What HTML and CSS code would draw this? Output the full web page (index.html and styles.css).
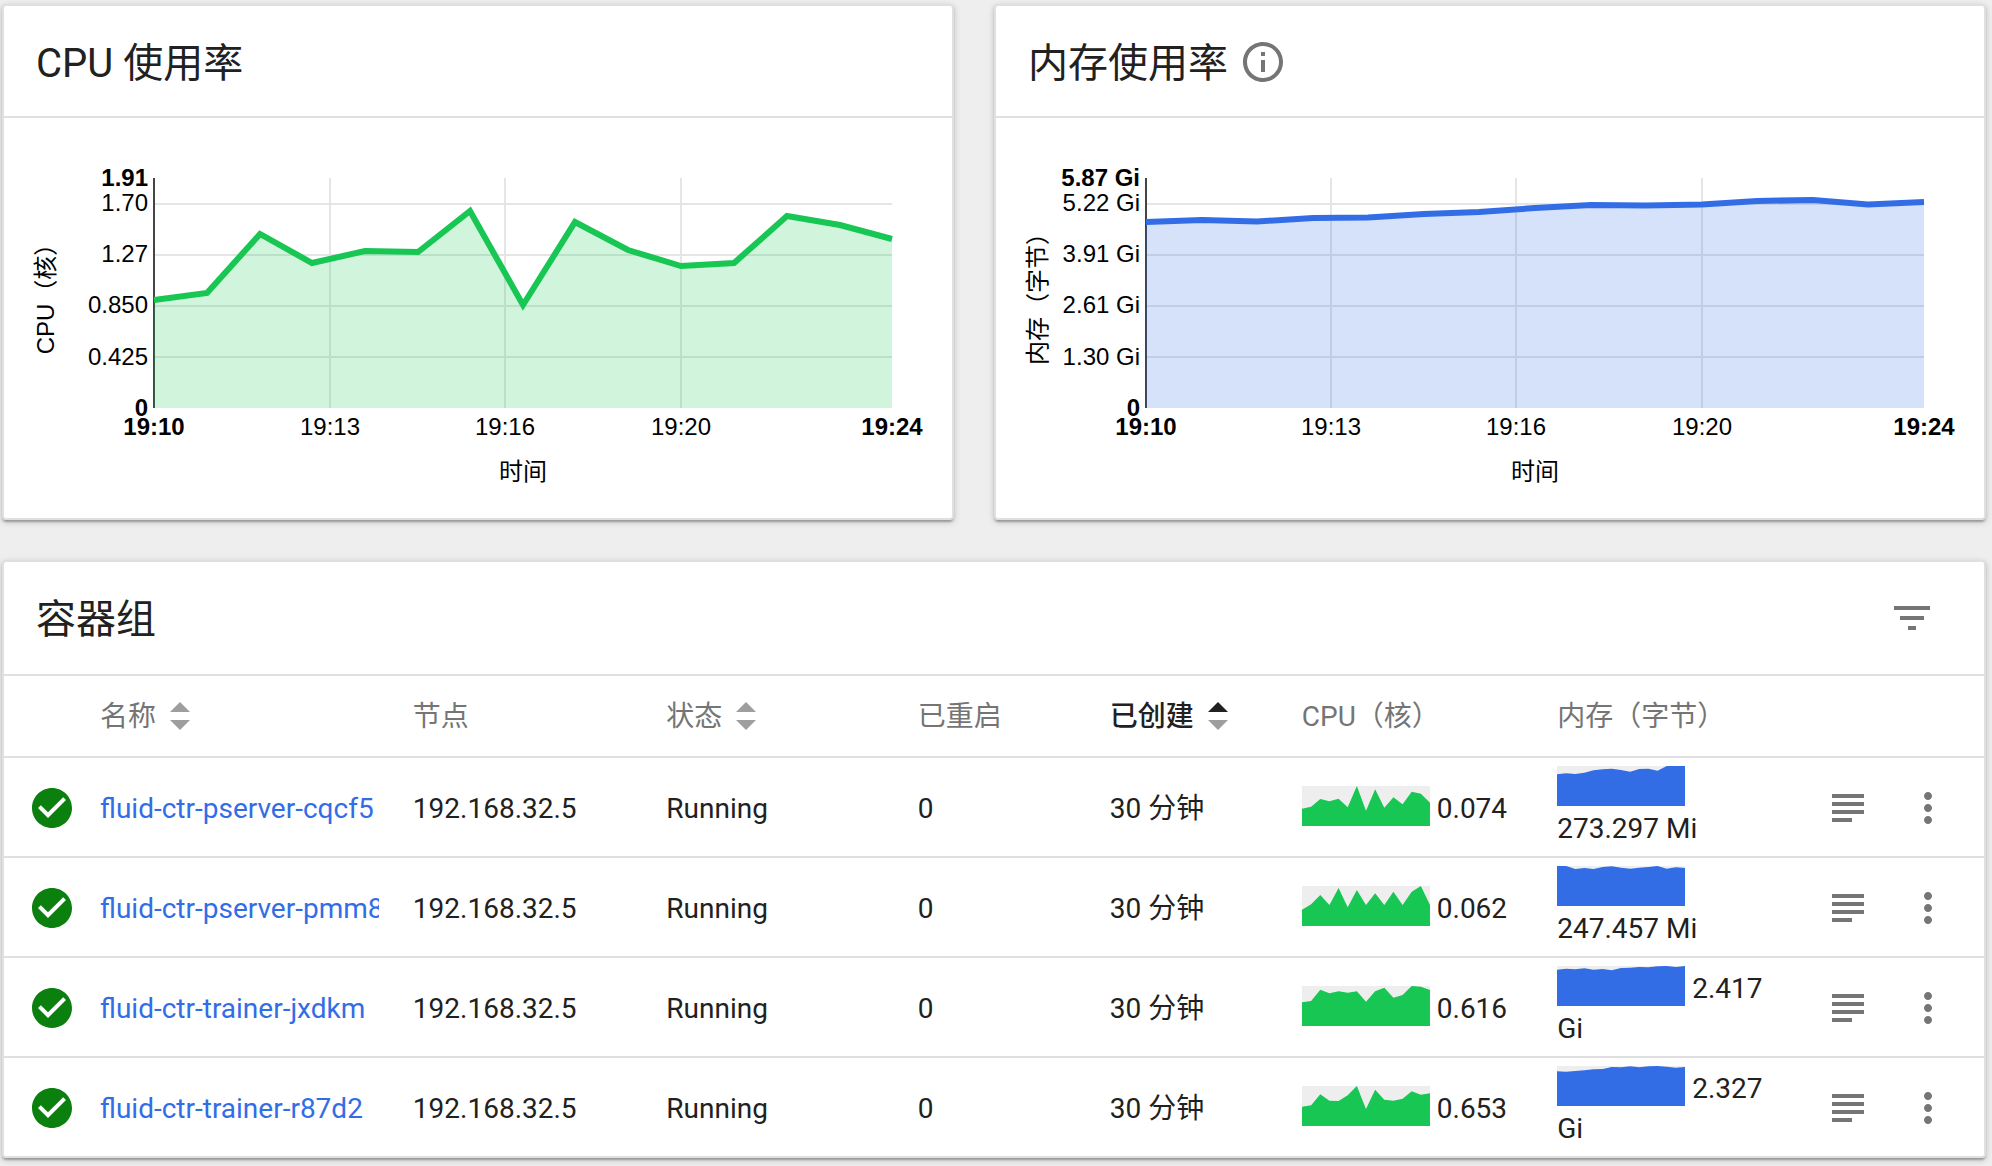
FILE: index.html
```
<!DOCTYPE html>
<html lang="zh-CN">
<head>
<meta charset="utf-8">
<title>容器组</title>
<link rel="stylesheet" href="styles.css">
</head>
<body>
<svg class="defs" width="0" height="0" aria-hidden="true">
  <symbol id="i-check" viewBox="0 0 24 24"><path d="M12 2C6.48 2 2 6.48 2 12s4.48 10 10 10 10-4.48 10-10S17.52 2 12 2zm-2 15l-5-5 1.41-1.41L10 14.17l7.59-7.59L19 8l-9 9z"/></symbol>
  <symbol id="i-info" viewBox="0 0 24 24"><path d="M11 17h2v-6h-2v6zm1-15C6.48 2 2 6.48 2 12s4.48 10 10 10 10-4.48 10-10S17.52 2 12 2zm0 18c-4.41 0-8-3.59-8-8s3.59-8 8-8 8 3.59 8 8-3.59 8-8 8zM11 9h2V7h-2v2z"/></symbol>
  <symbol id="i-filter" viewBox="0 0 24 24"><path d="M10 18h4v-2h-4v2zM3 6v2h18V6H3zm3 7h12v-2H6v2z"/></symbol>
  <symbol id="i-logs" viewBox="0 0 24 24"><path d="M14 17H4v2h10v-2zm6-8H4v2h16V9zM4 15h16v-2H4v2zM4 5v2h16V5H4z"/></symbol>
  <symbol id="i-more" viewBox="0 0 24 24"><path d="M12 8c1.1 0 2-.9 2-2s-.9-2-2-2-2 .9-2 2 .9 2 2 2zm0 2c-1.1 0-2 .9-2 2s.9 2 2 2 2-.9 2-2-.9-2-2-2zm0 6c-1.1 0-2 .9-2 2s.9 2 2 2 2-.9 2-2-.9-2-2-2z"/></symbol>
</svg>
<main class="page">
  <section class="card">
    <header class="card-header"><h2 class="card-title">CPU 使用率</h2></header>
    <svg class="chart chart-cpu" viewBox="0 0 948 400" role="img" aria-label="CPU 使用率">
      <path class="grid" d="M150 86H888M150 137H888M150 188H888M150 239H888M326 60V290M501 60V290M677 60V290"/>
      <path class="axis" d="M150 60V290"/>
      <path class="area" d="M150 290V182L203 175L256 116L308 145L361 133L414 134L466 93L519 187L571 104L624 132L677 148L730 145L783 98L836 107L888 121V290Z"/>
      <path class="line" d="M150 182L203 175L256 116L308 145L361 133L414 134L466 93L519 187L571 104L624 132L677 148L730 145L783 98L836 107L888 121"/>
      <g class="y-labels">
        <text class="strong" x="144" y="68">1.91</text>
        <text x="144" y="93">1.70</text>
        <text x="144" y="144">1.27</text>
        <text x="144" y="195">0.850</text>
        <text x="144" y="247">0.425</text>
        <text class="strong" x="144" y="298">0</text>
      </g>
      <g class="x-labels">
        <text class="strong" x="150" y="317">19:10</text>
        <text x="326" y="317">19:13</text>
        <text x="501" y="317">19:16</text>
        <text x="677" y="317">19:20</text>
        <text class="strong" x="888" y="317">19:24</text>
        <text x="519" y="362">时间</text>
        <text transform="translate(50 175) rotate(-90)">CPU（核）</text>
      </g>
    </svg>
  </section>

  <section class="card">
    <header class="card-header">
      <h2 class="card-title">内存使用率</h2>
      <svg class="icon info" role="img" aria-label="说明"><use href="#i-info"/></svg>
    </header>
    <svg class="chart chart-mem" viewBox="0 0 988 400" role="img" aria-label="内存使用率">
      <path class="grid" d="M150 86H928M150 137H928M150 188H928M150 239H928M335 60V290M520 60V290M706 60V290"/>
      <path class="axis" d="M150 60V290"/>
      <path class="area" d="M150 290V104L206 102L261 103.5L317 100L372 99.5L428 96L483 94L539 90L595 87L650 87.5L706 86.5L761 83L817 82L872 86.5L928 84V290Z"/>
      <path class="line" d="M150 104L206 102L261 103.5L317 100L372 99.5L428 96L483 94L539 90L595 87L650 87.5L706 86.5L761 83L817 82L872 86.5L928 84"/>
      <g class="y-labels">
        <text class="strong" x="144" y="68">5.87 Gi</text>
        <text x="144" y="93">5.22 Gi</text>
        <text x="144" y="144">3.91 Gi</text>
        <text x="144" y="195">2.61 Gi</text>
        <text x="144" y="247">1.30 Gi</text>
        <text class="strong" x="144" y="298">0</text>
      </g>
      <g class="x-labels">
        <text class="strong" x="150" y="317">19:10</text>
        <text x="335" y="317">19:13</text>
        <text x="520" y="317">19:16</text>
        <text x="706" y="317">19:20</text>
        <text class="strong" x="928" y="317">19:24</text>
        <text x="539" y="362">时间</text>
        <text transform="translate(50 175) rotate(-90)">内存（字节）</text>
      </g>
    </svg>
  </section>

  <section class="card pods">
    <header class="card-header">
      <h2 class="card-title">容器组</h2>
      <button class="icon-button filter" type="button" aria-label="筛选"><svg class="icon"><use href="#i-filter"/></svg></button>
    </header>
    <table class="table">
      <colgroup>
        <col class="c-status"><col class="c-name"><col class="c-node"><col class="c-state"><col class="c-restarts"><col class="c-age"><col class="c-cpu"><col class="c-mem"><col class="c-logs"><col class="c-more">
      </colgroup>
      <thead>
        <tr>
          <th></th>
          <th scope="col"><button class="sort" type="button">名称<svg class="arrows" viewBox="0 0 20 28"><path d="M0 10L10 0L20 10Z"/><path d="M0 18H20L10 28Z"/></svg></button></th>
          <th scope="col">节点</th>
          <th scope="col"><button class="sort" type="button">状态<svg class="arrows" viewBox="0 0 20 28"><path d="M0 10L10 0L20 10Z"/><path d="M0 18H20L10 28Z"/></svg></button></th>
          <th scope="col">已重启</th>
          <th scope="col" aria-sort="ascending"><button class="sort sorted" type="button">已创建<svg class="arrows" viewBox="0 0 20 28"><path class="active" d="M0 10L10 0L20 10Z"/><path d="M0 18H20L10 28Z"/></svg></button></th>
          <th scope="col">CPU（核）</th>
          <th scope="col">内存（字节）</th>
          <th></th>
          <th></th>
        </tr>
      </thead>
      <tbody>
        <tr>
          <td class="tool status"><svg class="icon ok" role="img" aria-label="正常"><use href="#i-check"/></svg></td>
          <td><a class="name" href="#cqcf5">fluid-ctr-pserver-cqcf5</a></td>
          <td>192.168.32.5</td><td>Running</td><td>0</td><td>30 分钟</td>
          <td class="metric"><svg class="spark cpu" viewBox="0 0 14 120" preserveAspectRatio="none"><path d="M0 120V68L1 62L2 39L3 46L4 38L5 64L6 0L7 74L8 10L9 65L10 34L11 55L12 17L13 23L14 50V120Z"/></svg> 0.074</td>
          <td class="metric"><svg class="spark mem" viewBox="0 0 14 120" preserveAspectRatio="none"><path d="M0 120V25L1 22L2 24L3 20L4 13L5 10L6 8L7 12L8 17L9 9L10 8L11 14L12 0H14V120Z"/></svg> 273.297 Mi</td>
          <td class="tool"><button class="icon-button" type="button" aria-label="日志"><svg class="icon"><use href="#i-logs"/></svg></button></td>
          <td class="tool"><button class="icon-button" type="button" aria-label="更多"><svg class="icon"><use href="#i-more"/></svg></button></td>
        </tr>
        <tr>
          <td class="tool status"><svg class="icon ok" role="img" aria-label="正常"><use href="#i-check"/></svg></td>
          <td><a class="name" href="#pmm8">fluid-ctr-pserver-pmm8</a></td>
          <td>192.168.32.5</td><td>Running</td><td>0</td><td>30 分钟</td>
          <td class="metric"><svg class="spark cpu" viewBox="0 0 14 120" preserveAspectRatio="none"><path d="M0 120V71L1 55L2 27L3 57L4 6L5 64L6 12L7 57L8 22L9 57L10 17L11 57L12 17L13 0L14 57V120Z"/></svg> 0.062</td>
          <td class="metric"><svg class="spark mem" viewBox="0 0 14 120" preserveAspectRatio="none"><path d="M0 120V0H1L2 9L3 6L4 9L5 3L6 1L7 5L8 8L9 5L10 3L11 0L12 8L13 4L14 6V120Z"/></svg> 247.457 Mi</td>
          <td class="tool"><button class="icon-button" type="button" aria-label="日志"><svg class="icon"><use href="#i-logs"/></svg></button></td>
          <td class="tool"><button class="icon-button" type="button" aria-label="更多"><svg class="icon"><use href="#i-more"/></svg></button></td>
        </tr>
        <tr>
          <td class="tool status"><svg class="icon ok" role="img" aria-label="正常"><use href="#i-check"/></svg></td>
          <td><a class="name" href="#jxdkm">fluid-ctr-trainer-jxdkm</a></td>
          <td>192.168.32.5</td><td>Running</td><td>0</td><td>30 分钟</td>
          <td class="metric"><svg class="spark cpu" viewBox="0 0 14 120" preserveAspectRatio="none"><path d="M0 120V49L1 45L2 11L3 22L4 16L5 20L6 16L7 47L8 16L9 5L10 35L11 27L12 0L13 2L14 12V120Z"/></svg> 0.616</td>
          <td class="metric"><svg class="spark mem" viewBox="0 0 14 120" preserveAspectRatio="none"><path d="M0 120V11L1 8L2 10L3 7L4 11L5 9L6 13L7 6L8 5L9 3L10 4L11 1L12 0L13 3L14 0V120Z"/></svg> 2.417 Gi</td>
          <td class="tool"><button class="icon-button" type="button" aria-label="日志"><svg class="icon"><use href="#i-logs"/></svg></button></td>
          <td class="tool"><button class="icon-button" type="button" aria-label="更多"><svg class="icon"><use href="#i-more"/></svg></button></td>
        </tr>
        <tr>
          <td class="tool status"><svg class="icon ok" role="img" aria-label="正常"><use href="#i-check"/></svg></td>
          <td><a class="name" href="#r87d2">fluid-ctr-trainer-r87d2</a></td>
          <td>192.168.32.5</td><td>Running</td><td>0</td><td>30 分钟</td>
          <td class="metric"><svg class="spark cpu" viewBox="0 0 14 120" preserveAspectRatio="none"><path d="M0 120V62L1 58L2 25L3 44L4 45L5 28L6 0L7 69L8 11L9 41L10 44L11 38L12 16L13 26L14 22V120Z"/></svg> 0.653</td>
          <td class="metric"><svg class="spark mem" viewBox="0 0 14 120" preserveAspectRatio="none"><path d="M0 120V16L1 17L2 15L3 13L4 10L5 9L6 3L7 4L8 1L9 4L10 1L11 0L12 2L13 5L14 3V120Z"/></svg> 2.327 Gi</td>
          <td class="tool"><button class="icon-button" type="button" aria-label="日志"><svg class="icon"><use href="#i-logs"/></svg></button></td>
          <td class="tool"><button class="icon-button" type="button" aria-label="更多"><svg class="icon"><use href="#i-more"/></svg></button></td>
        </tr>
      </tbody>
    </table>
  </section>
</main>
</body>
</html>
```
FILE: styles.css
```
* {
  box-sizing: border-box;
}

body {
  margin: 0;
  background: #eee;
  color: #212121;
  font: 28px/40px Roboto, "Noto Sans CJK SC", sans-serif;
}

.defs {
  position: absolute;
}

.page {
  display: grid;
  grid-template-columns: 952fr 992fr;
  gap: 40px;
  padding: 4px 6px 8px 2px;
}

.card {
  min-width: 0;
  background: #fff;
  border: 2px solid #e0e0e0;
  border-radius: 4px;
  box-shadow: 0 2px 6px rgba(0, 0, 0, 0.2), 0 2px 2px rgba(0, 0, 0, 0.14), 0 4px 2px -2px rgba(0, 0, 0, 0.12);
}

.pods {
  grid-column: 1 / -1;
}

.card-header {
  display: flex;
  align-items: center;
  min-height: 112px;
  padding: 2px 48px 0 32px;
  border-bottom: 2px solid #e0e0e0;
}

.pods .card-header {
  min-height: 114px;
  padding-top: 0;
}

.card-title {
  margin: 0;
  padding-top: 3px;
  font-size: 40px;
  line-height: 48px;
  font-weight: 400;
}

.icon {
  display: block;
  width: 48px;
  height: 48px;
  fill: #757575;
}

.info {
  margin-left: 11px;
}

.icon-button {
  display: block;
  margin: 0 0 0 16px;
  padding: 0;
  border: 0;
  background: none;
  cursor: pointer;
}

.filter {
  margin-left: auto;
}

/* charts */
.chart {
  display: block;
  width: 100%;
  height: auto;
  font: 24px "Liberation Sans", "Noto Sans CJK SC", sans-serif;
}

.chart text {
  fill: #000;
}

.chart .strong {
  font-weight: 700;
}

.y-labels {
  text-anchor: end;
}

.x-labels {
  text-anchor: middle;
}

.grid {
  fill: none;
  stroke: #e5e5e5;
  stroke-width: 2;
}

.axis {
  stroke: #444;
  stroke-width: 2;
}

.area {
  opacity: 0.2;
}

.line {
  fill: none;
  stroke-width: 6;
}

.chart-cpu .area {
  fill: #17c653;
}

.chart-cpu .line {
  stroke: #17c653;
}

.chart-mem .area {
  fill: #326de6;
}

.chart-mem .line {
  stroke: #326de6;
}

/* pods table */
.table {
  width: 100%;
  table-layout: fixed;
  border-collapse: separate;
  border-spacing: 0;
}

.c-status { width: 96px; }
.c-name { width: 15.8%; }
.c-node { width: 12.8%; }
.c-state { width: 12.7%; }
.c-restarts { width: 9.7%; }
.c-age { width: 9.7%; }
.c-cpu { width: 12.9%; }
.c-logs { width: 80px; }
.c-more { width: 96px; }

th {
  height: 82px;
  padding: 2px 0 0;
  border-bottom: 2px solid #e0e0e0;
  color: #757575;
  font-weight: 400;
  text-align: left;
  white-space: nowrap;
}

td {
  height: 100px;
  padding: 4px 0 0;
  border-bottom: 2px solid #e0e0e0;
  vertical-align: middle;
}

tbody tr:last-child td {
  height: 98px;
  border-bottom: 0;
}

td.tool {
  padding-top: 2px;
}

td.status {
  padding-left: 24px;
}

td.metric {
  padding: 7px 32px 7px 0;
}

.ok {
  fill: #0c800f;
}

.sort {
  display: flex;
  align-items: center;
  gap: 14px;
  padding: 0;
  border: 0;
  background: none;
  color: inherit;
  font: inherit;
  cursor: pointer;
}

.sorted {
  color: #212121;
  font-weight: 500;
}

.arrows {
  width: 20px;
  height: 28px;
  margin-bottom: 2px;
  fill: #9e9e9e;
}

.arrows .active {
  fill: #212121;
}

.name {
  display: block;
  margin-right: 34px;
  overflow: hidden;
  color: #326de6;
  text-decoration: none;
  white-space: nowrap;
}

.spark {
  width: 128px;
  height: 40px;
  background: #eee;
  vertical-align: -8px;
}

.cpu {
  fill: #17c653;
}

.mem {
  fill: #326de6;
}
```
